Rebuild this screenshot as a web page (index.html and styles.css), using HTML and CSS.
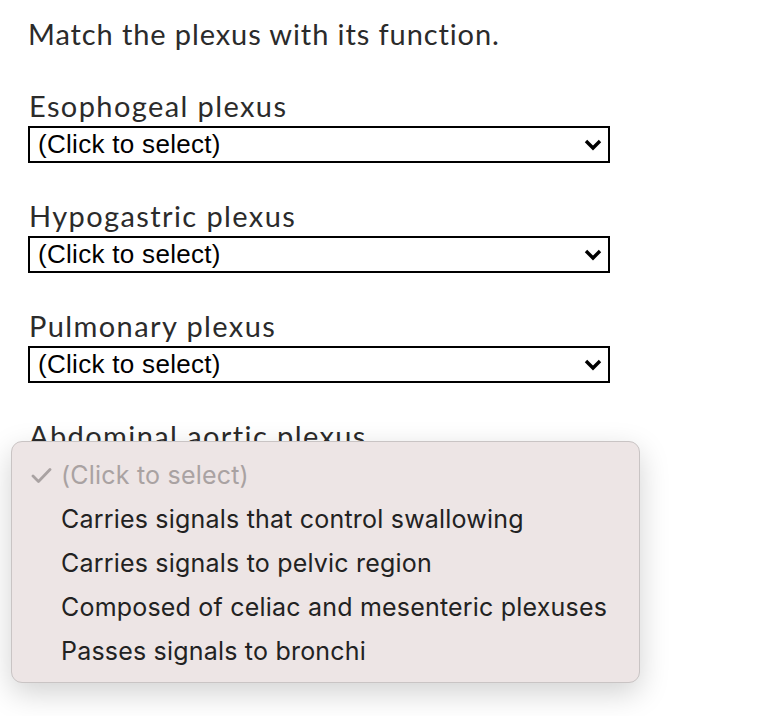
FILE: index.html
```html
<!DOCTYPE html>
<html lang="en">
<head>
    <meta charset="UTF-8">
    <title>Match the plexus</title>
    <link rel="stylesheet" href="styles.css">
</head>
<body>
    <div class="quiz">
        <h1 class="prompt">Match the plexus with its function.</h1>

        <div class="item">
            <div class="item-label">Esophogeal plexus</div>
            <div class="select-box">
                <span>(Click to select)</span>
                <svg class="chevron" width="18" height="12" viewBox="0 0 18 12"><path d="M2 2l7 7 7-7" fill="none" stroke="#000" stroke-width="3.4"/></svg>
            </div>
        </div>

        <div class="item">
            <div class="item-label">Hypogastric plexus</div>
            <div class="select-box">
                <span>(Click to select)</span>
                <svg class="chevron" width="18" height="12" viewBox="0 0 18 12"><path d="M2 2l7 7 7-7" fill="none" stroke="#000" stroke-width="3.4"/></svg>
            </div>
        </div>

        <div class="item">
            <div class="item-label">Pulmonary plexus</div>
            <div class="select-box">
                <span>(Click to select)</span>
                <svg class="chevron" width="18" height="12" viewBox="0 0 18 12"><path d="M2 2l7 7 7-7" fill="none" stroke="#000" stroke-width="3.4"/></svg>
            </div>
        </div>

        <div class="item">
            <div class="item-label">Abdominal aortic plexus</div>
            <div class="select-box">
                <span>(Click to select)</span>
                <svg class="chevron" width="18" height="12" viewBox="0 0 18 12"><path d="M2 2l7 7 7-7" fill="none" stroke="#000" stroke-width="3.4"/></svg>
            </div>
        </div>
    </div>

    <ul class="dropdown">
        <li class="option selected">
            <svg class="check" width="21" height="15" viewBox="0 0 21 15"><path d="M2 8l5.5 5.5L19 1.5" fill="none" stroke="#a9a2a2" stroke-width="2.8" stroke-linecap="round" stroke-linejoin="round"/></svg>
            (Click to select)
        </li>
        <li class="option">Carries signals that control swallowing</li>
        <li class="option">Carries signals to pelvic region</li>
        <li class="option">Composed of celiac and mesenteric plexuses</li>
        <li class="option">Passes signals to bronchi</li>
    </ul>
</body>
</html>
```

FILE: styles.css
```css
body {
    margin: 0;
    background: #fff;
    font-family: Lato, "Open Sans", sans-serif;
    color: #2b2b2b;
}
.quiz {
    padding: 14px 0 0 28px;
    width: 582px;
}
.prompt {
    margin: 0;
    font-size: 29px;
    font-weight: normal;
    line-height: 40px;
    letter-spacing: 0.9px;
}
.item {
    margin-top: 32px;
}
.item + .item {
    margin-top: 33px;
}
.item-label {
    font-size: 29px;
    line-height: 40px;
    letter-spacing: 1.4px;
    padding-left: 1px;
}
.select-box {
    height: 37px;
    box-sizing: border-box;
    border: 2px solid #000;
    display: flex;
    align-items: center;
    justify-content: space-between;
    padding: 0 6px 0 8px;
    font-family: "Liberation Sans", Arial, sans-serif;
    font-size: 26px;
    letter-spacing: 0.3px;
    color: #000;
}
.chevron {
    display: block;
}
.dropdown {
    position: absolute;
    top: 441px;
    left: 11px;
    width: 629px;
    height: 242px;
    box-sizing: border-box;
    margin: 0;
    padding: 11px 0 0 0;
    list-style: none;
    background: #ede5e5;
    border: 1px solid #c9c4c4;
    border-radius: 11px;
    box-shadow: 0 10px 30px rgba(0, 0, 0, 0.18);
    font-family: Inter, "Noto Sans", sans-serif;
    font-size: 25px;
    letter-spacing: 0.2px;
    color: #222;
}
.option {
    position: relative;
    height: 44px;
    line-height: 44px;
    padding-left: 49px;
}
.option.selected {
    color: #a9a2a2;
}
.check {
    position: absolute;
    left: 19px;
    top: 15px;
}
```
